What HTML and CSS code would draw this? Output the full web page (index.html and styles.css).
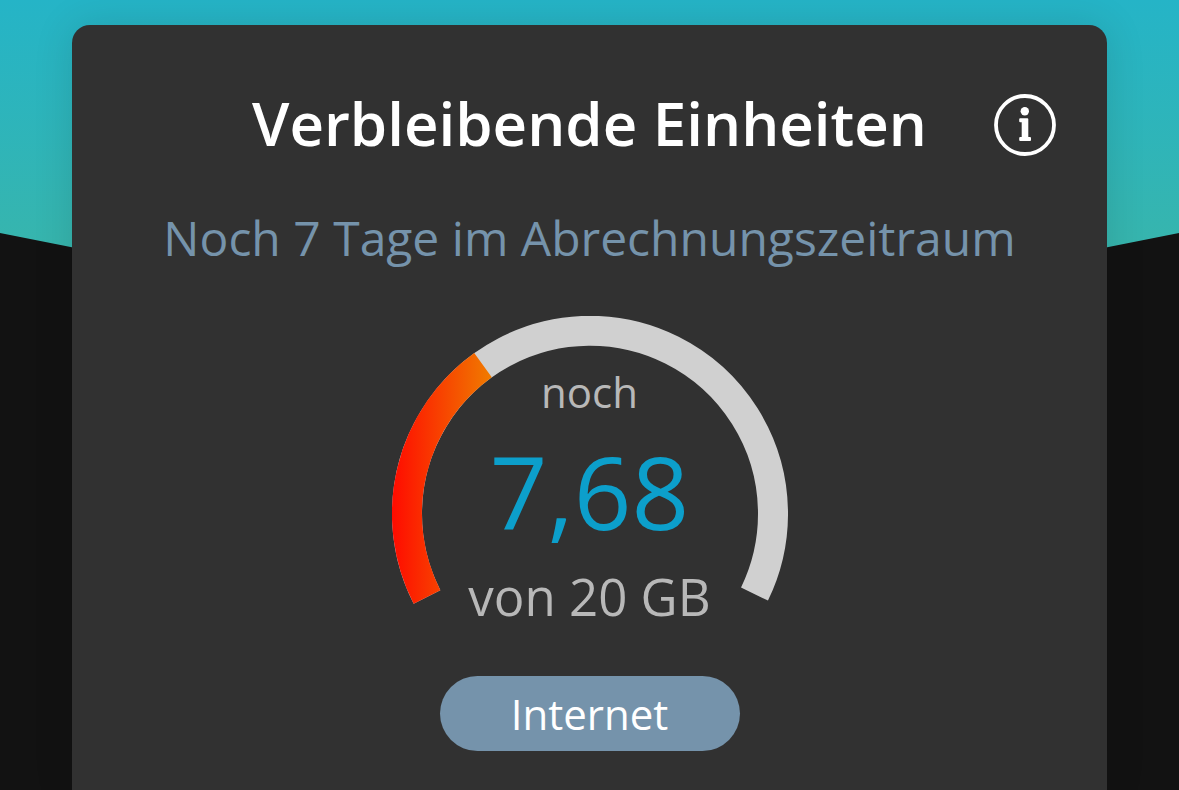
FILE: index.html
```html
<!DOCTYPE html>
<html lang="de">
<head>
<meta charset="utf-8">
<meta name="viewport" content="width=device-width, initial-scale=1">
<title>Verbleibende Einheiten</title>
<link rel="stylesheet" href="styles.css">
</head>
<body>
<svg class="backdrop" viewBox="0 0 1179 360" preserveAspectRatio="none" aria-hidden="true">
  <defs>
    <linearGradient id="sky" gradientUnits="userSpaceOnUse" x1="0" y1="0" x2="0" y2="250">
      <stop offset="0" stop-color="#25b4c7"/>
      <stop offset="1" stop-color="#37b5ad"/>
    </linearGradient>
  </defs>
  <path fill="url(#sky)" d="M0 0H1179V233L590 350L0 233Z"/>
</svg>
<main class="card">
  <header class="card-header">
    <h1 class="title">Verbleibende Einheiten</h1>
    <button class="info" type="button" aria-label="Information">
      <svg viewBox="0 0 62 62" aria-hidden="true">
        <circle cx="31" cy="31" r="29" fill="none" stroke="#fff" stroke-width="3.8"/>
        <circle cx="30.800" cy="17.300" r="4.200" fill="#fff"/>
        <path fill="#fff" stroke="#fff" stroke-width="2" stroke-linejoin="round" d="M26.200 25.200H33.300V44H36V46H26.200V44H28.700V27.200H26.200Z"/>
      </svg>
    </button>
  </header>
  <p class="period">Noch 7 Tage im Abrechnungszeitraum</p>
  <section class="gauge">
    <svg class="gauge-arc" viewBox="0 0 396 290" aria-hidden="true">
      <defs>
        <linearGradient id="heat" gradientUnits="userSpaceOnUse" x1="0" y1="0" x2="100" y2="0">
          <stop offset="0" stop-color="#ff0b00"/>
          <stop offset="1" stop-color="#f07c00"/>
        </linearGradient>
      </defs>
      <path fill="none" stroke="#d0d0d0" stroke-width="30" d="M35 281A183 183 0 1 1 362.500 278"/>
      <path fill="none" stroke="url(#heat)" stroke-width="30" d="M35 281A183 183 0 0 1 91 49.200"/>
    </svg>
    <div class="reading">
      <span class="label">noch</span>
      <strong class="amount">7,68</strong>
      <span class="total">von 20 GB</span>
    </div>
  </section>
  <button class="pill" type="button">Internet</button>
</main>
</body>
</html>
```
FILE: styles.css
```css
* {
  box-sizing: border-box;
}

body {
  margin: 0;
  min-height: 100vh;
  display: flex;
  padding: 25px 72px 0;
  background: #121212;
  color: #fff;
  font-family: "Open Sans", "Noto Sans", sans-serif;
}

.backdrop {
  position: absolute;
  inset: 0 0 auto;
  width: 100%;
  height: 360px;
}

.card {
  position: relative;
  flex: 1;
  display: flex;
  flex-direction: column;
  align-items: center;
  padding: 62px 51px 39px;
  border-radius: 18px 18px 0 0;
  background: #313131;
  box-shadow: 0 0 40px rgba(0, 0, 0, 0.12);
}

.card-header {
  align-self: stretch;
  display: grid;
  grid-template-columns: 62px 1fr 62px;
  align-items: end;
}

.title {
  grid-column: 2;
  margin: 0;
  text-align: center;
  font-size: 60px;
  line-height: 72px;
  font-weight: 600;
  white-space: nowrap;
}

.info {
  width: 62px;
  height: 62px;
  margin-bottom: 3px;
  padding: 0;
  border: 0;
  background: none;
}

.info svg {
  display: block;
}

.period {
  margin: 47px 0 0;
  color: #7593ab;
  font-size: 48px;
  line-height: 64px;
  white-space: nowrap;
}

.gauge {
  display: grid;
  justify-items: center;
  margin-top: 46px;
}

.gauge-arc {
  grid-area: 1 / 1;
  width: 396px;
  height: 290px;
}

.reading {
  grid-area: 1 / 1;
  display: flex;
  flex-direction: column;
  align-items: center;
  padding-top: 48px;
  color: #b8b8b8;
}

.label {
  font-size: 42px;
  line-height: 56px;
}

.amount {
  color: #0c9fcb;
  font-size: 101px;
  line-height: 142px;
  font-weight: 400;
}

.total {
  font-size: 51px;
  line-height: 68px;
}

.pill {
  width: 300px;
  height: 75px;
  margin-top: 46px;
  padding: 0;
  border: 0;
  border-radius: 38px;
  background: #7593ab;
  color: #fff;
  font-family: inherit;
  font-size: 42px;
  line-height: 75px;
}
```
